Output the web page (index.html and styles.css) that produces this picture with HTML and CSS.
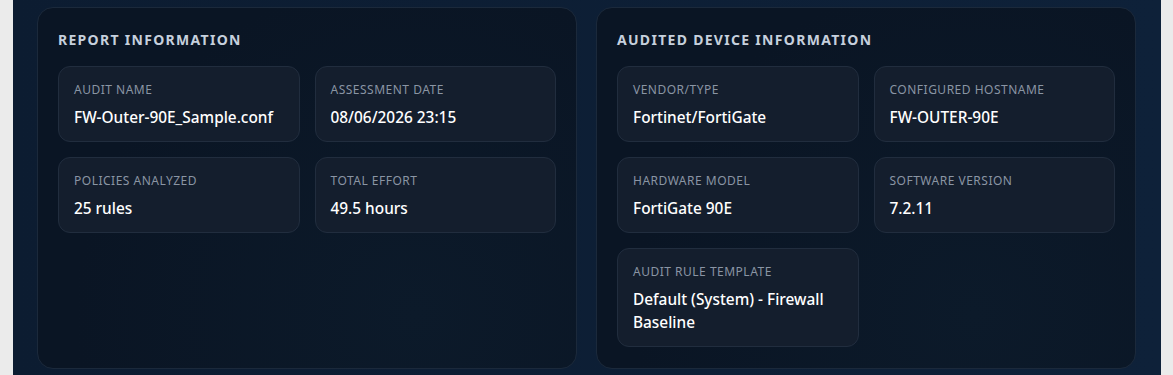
FILE: index.html
```html
<!DOCTYPE html>
<html>

<head>
    <meta charset="utf-8" />
    <meta name="viewport" content="width=device-width, initial-scale=1.0">
    <title>Audit Report</title>
    <link rel="stylesheet" href="styles.css">
</head>

<body>
    <div class="main">
        <div class="panels">
            <!-- report info -->
            <section class="panel">
                <h3 class="panelTitle">Report Information</h3>
                <div class="grid">
                    <div class="card">
                        <div class="label">Audit Name</div>
                        <div class="value">FW-Outer-90E_Sample.conf</div>
                    </div>
                    <div class="card">
                        <div class="label">Assessment Date</div>
                        <div class="value">08/06/2026 23:15</div>
                    </div>
                    <div class="card">
                        <div class="label">Policies Analyzed</div>
                        <div class="value">25 rules</div>
                    </div>
                    <div class="card">
                        <div class="label">Total Effort</div>
                        <div class="value">49.5 hours</div>
                    </div>
                </div>
            </section>

            <!-- device info -->
            <section class="panel">
                <h3 class="panelTitle">Audited Device Information</h3>
                <div class="grid">
                    <div class="card">
                        <div class="label">Vendor/Type</div>
                        <div class="value">Fortinet/FortiGate</div>
                    </div>
                    <div class="card">
                        <div class="label">Configured Hostname</div>
                        <div class="value">FW-OUTER-90E</div>
                    </div>
                    <div class="card">
                        <div class="label">Hardware Model</div>
                        <div class="value">FortiGate 90E</div>
                    </div>
                    <div class="card">
                        <div class="label">Software Version</div>
                        <div class="value">7.2.11</div>
                    </div>
                    <div class="card">
                        <div class="label">Audit Rule Template</div>
                        <div class="value">Default (System) - Firewall Baseline</div>
                    </div>
                </div>
            </section>
        </div>
    </div>
</body>

</html>
```

FILE: styles.css
```css
* {
    box-sizing: border-box;
}

h3,
body,
div {
    margin: 0px;
    padding: 0px;
}

body {
    font-family: "Noto Sans", "Open Sans", sans-serif;
    background-color: #ebebeb;
    height: 375px;
    overflow: hidden;
}

.main {
    margin: 0px 12px 0px 13px;
    height: 375px;
    background: linear-gradient(to right, #0c1c31, #0e2139);
    padding: 7px 25px 0px 24px;
}

.panels {
    display: grid;
    grid-template-columns: 1fr 1fr;
    gap: 19px;
}

.panel {
    height: 362px;
    background: radial-gradient(circle at 70% 85%, #0c1a2a, #0a1524 70%);
    border: 1px solid #1b293b;
    border-radius: 16px;
    padding: 22px 20px 20px 20px;
}

.panelTitle {
    font-size: 14px;
    line-height: 19px;
    font-weight: 700;
    letter-spacing: 1.3px;
    text-transform: uppercase;
    color: #c6d0dd;
    margin-bottom: 17px;
}

.grid {
    display: grid;
    grid-template-columns: 1fr 1fr;
    gap: 15px;
}

.card {
    background-color: #141e2d;
    border: 1px solid #212d3e;
    border-radius: 12px;
    padding: 15px 15px 12px 15px;
}

.label {
    font-size: 12px;
    line-height: 16px;
    letter-spacing: 0.5px;
    text-transform: uppercase;
    color: #8a95a4;
    margin-bottom: 8px;
}

.value {
    font-size: 15.4px;
    line-height: 23px;
    font-weight: 500;
    color: #ffffff;
}
```
